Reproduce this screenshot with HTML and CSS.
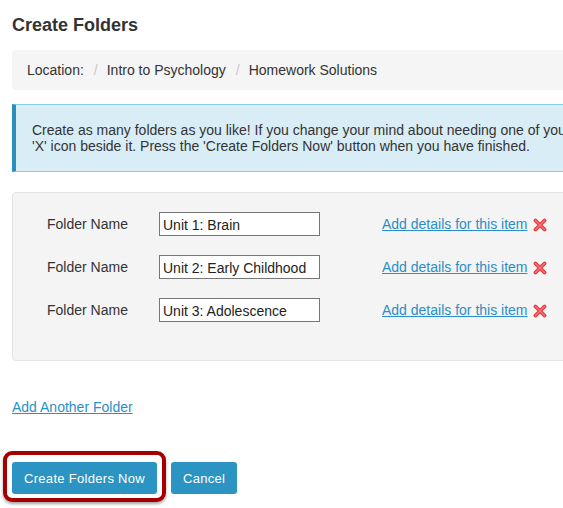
FILE: index.html
```html
<!DOCTYPE html>
<html>
<head>
<meta charset="utf-8">
<link rel="stylesheet" href="styles.css">
</head>
<body>
<div class="page">
  <h1 class="title">Create Folders</h1>
  <div class="crumbs">
    <span>Location:</span><span class="sep">/</span><span>Intro to Psychology</span><span class="sep">/</span><span>Homework Solutions</span>
  </div>
  <div class="alert">
    Create as many folders as you like! If you change your mind about needing one of your folders, click the<br>
    'X' icon beside it. Press the 'Create Folders Now' button when you have finished.
  </div>
  <div class="panel">
    <div class="row">
      <label class="lbl">Folder Name</label>
      <input class="field" type="text" value="Unit 1: Brain">
      <a class="details" href="#">Add details for this item</a>
      <svg class="del" width="14" height="14" viewBox="0 0 14 14"><path d="M2.5 2.5 L11.5 11.5 M11.5 2.5 L2.5 11.5" stroke="#e8353c" stroke-width="3.8" stroke-linecap="round"/><path d="M2.5 2.5 L11.5 11.5 M11.5 2.5 L2.5 11.5" stroke="#f7777c" stroke-width="1.4" stroke-linecap="round"/></svg>
    </div>
    <div class="row">
      <label class="lbl">Folder Name</label>
      <input class="field" type="text" value="Unit 2: Early Childhood">
      <a class="details" href="#">Add details for this item</a>
      <svg class="del" width="14" height="14" viewBox="0 0 14 14"><path d="M2.5 2.5 L11.5 11.5 M11.5 2.5 L2.5 11.5" stroke="#e8353c" stroke-width="3.8" stroke-linecap="round"/><path d="M2.5 2.5 L11.5 11.5 M11.5 2.5 L2.5 11.5" stroke="#f7777c" stroke-width="1.4" stroke-linecap="round"/></svg>
    </div>
    <div class="row">
      <label class="lbl">Folder Name</label>
      <input class="field" type="text" value="Unit 3: Adolescence">
      <a class="details" href="#">Add details for this item</a>
      <svg class="del" width="14" height="14" viewBox="0 0 14 14"><path d="M2.5 2.5 L11.5 11.5 M11.5 2.5 L2.5 11.5" stroke="#e8353c" stroke-width="3.8" stroke-linecap="round"/><path d="M2.5 2.5 L11.5 11.5 M11.5 2.5 L2.5 11.5" stroke="#f7777c" stroke-width="1.4" stroke-linecap="round"/></svg>
    </div>
  </div>
  <a class="another" href="#">Add Another Folder</a>
  <div class="actions">
    <span class="highlight"><button class="btn">Create Folders Now</button></span>
    <button class="btn">Cancel</button>
  </div>
</div>
</body>
</html>
```

FILE: styles.css
```css
html {
  overflow: hidden;
}
html, body {
  margin: 0;
  padding: 0;
  background: #fff;
}
body {
  font-family: "Liberation Sans", Arial, sans-serif;
  font-size: 14px;
  color: #333;
}
.page {
  width: 640px;
  padding: 15px 0 20px 12px;
}
.title {
  margin: 0;
  font-size: 18px;
  line-height: 20px;
  font-weight: bold;
  color: #333;
}
.crumbs {
  margin-top: 15px;
  background: #f5f5f5;
  border-radius: 4px;
  height: 40px;
  line-height: 40px;
  padding: 0 15px;
  display: flex;
  white-space: nowrap;
}
.sep {
  color: #c8c8c8;
  margin: 0 9px 0 10px;
}
.alert {
  margin-top: 14px;
  background: #d9edf7;
  border: 1px solid #8fcbe8;
  border-left: 4px solid #2a8fbd;
  padding: 17px 16px;
  line-height: 16px;
  white-space: nowrap;
  overflow: hidden;
}
.panel {
  margin-top: 20px;
  background: #f4f4f4;
  border: 1px solid #e3e3e3;
  border-radius: 4px;
  padding: 19px 0 38px 34px;
  display: flex;
  flex-direction: column;
  gap: 19px;
}
.row {
  display: flex;
  align-items: center;
  height: 24px;
}
.lbl {
  width: 112px;
  color: #333;
}
.field {
  box-sizing: border-box;
  width: 161px;
  height: 24px;
  margin: 0;
  border: 1px solid #767676;
  border-radius: 0;
  background: #fff;
  padding: 2px 2px 0 3px;
  font-family: "Liberation Sans", Arial, sans-serif;
  font-size: 14px;
  color: #222;
}
.details {
  margin-left: 62px;
  color: #2a8fc6;
  text-decoration: underline;
}
.del {
  margin-left: 5px;
  margin-top: 2px;
}
.another {
  display: inline-block;
  margin-top: 36px;
  line-height: 20px;
  color: #2a8fc6;
  text-decoration: underline;
}
.actions {
  margin-top: 45px;
  display: flex;
  gap: 14px;
}
.btn {
  height: 32px;
  padding: 0 12px;
  border: none;
  border-radius: 3px;
  background: #2c94c3;
  color: #fff;
  font-family: "Liberation Sans", Arial, sans-serif;
  font-size: 13px;
  letter-spacing: 0.3px;
  cursor: pointer;
}
.highlight {
  position: relative;
  display: inline-flex;
}
.highlight::after {
  content: "";
  position: absolute;
  left: -9px;
  top: -11px;
  right: -9px;
  bottom: -8px;
  border: 4px solid #a40000;
  border-radius: 9px;
  box-shadow: 0 2px 3px rgba(0,0,0,0.35);
  pointer-events: none;
}
```
